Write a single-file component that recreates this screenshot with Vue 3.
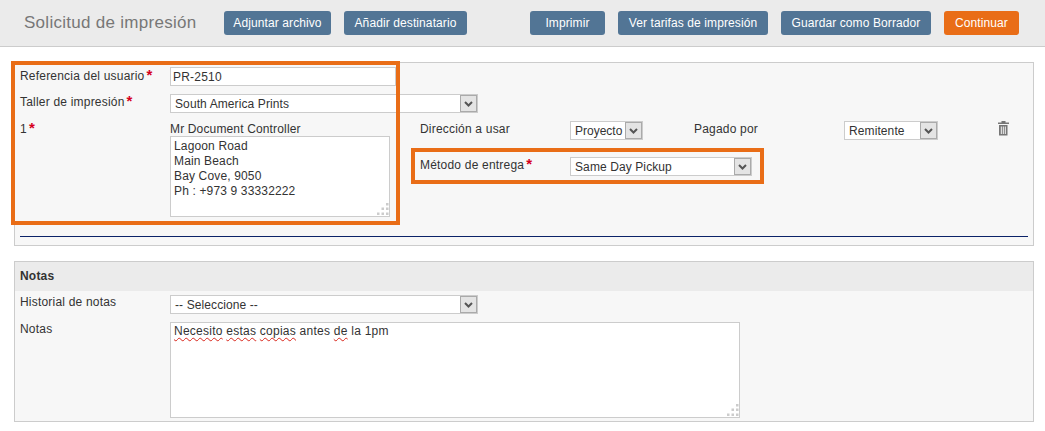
<script setup>
const address = ['Lagoon Road', 'Main Beach', 'Bay Cove, 9050', 'Ph : +973 9 33332222']
const leftButtons = ['Adjuntar archivo', 'Añadir destinatario']
const rightButtons = ['Imprimir', 'Ver tarifas de impresión', 'Guardar como Borrador']
const grip = [[10, 0], [5.5, 4.5], [10, 4.5], [1, 9.5], [5.5, 9.5], [10, 9.5]]
</script>

<template>
  <div class="page">
    <header class="topbar">
      <h1 class="title">Solicitud de impresión</h1>
      <button v-for="b in leftButtons" :key="b" class="btn left">{{ b }}</button>
      <span class="spacer"></span>
      <button v-for="b in rightButtons" :key="b" class="btn right">{{ b }}</button>
      <button class="btn cta">Continuar</button>
    </header>

    <section class="panel first">
      <div class="row r1">
        <label class="lbl">Referencia del usuario<i class="req">*</i></label>
        <div class="field input">PR-2510</div>
      </div>
      <div class="row r2">
        <label class="lbl">Taller de impresión<i class="req">*</i></label>
        <div class="field select wide"><span>South America Prints</span><b class="arrow"><svg width="9" height="6" viewBox="0 0 9 6"><path d="M1 1l3.5 3.5L8 1" fill="none" stroke="#555" stroke-width="2"/></svg></b></div>
      </div>
      <div class="row r3">
        <label class="lbl num">1<i class="req">*</i></label>
        <div class="addr">
          <div class="person">Mr Document Controller</div>
          <div class="field area addr-box">
            <div v-for="l in address" :key="l">{{ l }}</div>
            <svg class="grip" width="13" height="13" viewBox="0 0 13 13"><rect v-for="g in grip" :key="g.join()" :x="g[0]" :y="g[1]" width="2.5" height="2.5" fill="#ccc"/></svg>
          </div>
        </div>
        <div class="delivery">
          <div class="d-row">
            <span class="d-lbl">Dirección a usar</span>
            <div class="field select s-proj"><span>Proyecto</span><b class="arrow"><svg width="9" height="6" viewBox="0 0 9 6"><path d="M1 1l3.5 3.5L8 1" fill="none" stroke="#555" stroke-width="2"/></svg></b></div>
            <span class="d-paid">Pagado por</span>
            <div class="field select s-rem"><span>Remitente</span><b class="arrow"><svg width="9" height="6" viewBox="0 0 9 6"><path d="M1 1l3.5 3.5L8 1" fill="none" stroke="#555" stroke-width="2"/></svg></b></div>
            <svg class="trash" width="11" height="15" viewBox="0 0 11 15">
              <path d="M3.5 0h4v1.5H11V3H0V1.5h3.5z" fill="#777"/>
              <path d="M1 4h8.5v10.5H1z M2.8 5.5v7.5h1v-7.5z M4.8 5.5v7.5h1v-7.5z M6.8 5.5v7.5h1v-7.5z" fill="#777" fill-rule="evenodd"/>
            </svg>
          </div>
          <div class="d-row method">
            <span class="d-lbl">Método de entrega<i class="req">*</i></span>
            <div class="field select s-met"><span>Same Day Pickup</span><b class="arrow"><svg width="9" height="6" viewBox="0 0 9 6"><path d="M1 1l3.5 3.5L8 1" fill="none" stroke="#555" stroke-width="2"/></svg></b></div>
          </div>
        </div>
      </div>
      <div class="rule"></div>
    </section>

    <section class="panel second">
      <div class="p-head">Notas</div>
      <div class="row r4">
        <label class="lbl">Historial de notas</label>
        <div class="field select wide"><span>-- Seleccione --</span><b class="arrow"><svg width="9" height="6" viewBox="0 0 9 6"><path d="M1 1l3.5 3.5L8 1" fill="none" stroke="#555" stroke-width="2"/></svg></b></div>
      </div>
      <div class="row r5">
        <label class="lbl">Notas</label>
        <div class="field area notes">
          <span class="sp">Necesito</span> <span class="sp">estas</span> <span class="sp">copias</span> antes <span class="sp">de</span> la 1pm
          <svg class="grip" width="13" height="13" viewBox="0 0 13 13"><rect v-for="g in grip" :key="g.join()" :x="g[0]" :y="g[1]" width="2.5" height="2.5" fill="#ccc"/></svg>
        </div>
      </div>
    </section>

    <div class="mark m1"></div>
    <div class="mark m2"></div>
  </div>
</template>

<style scoped>
.page { position: relative; width: 1045px; height: 431px; overflow: hidden; background: #fff; font: 12px "Liberation Sans", Arial, sans-serif; color: #333; letter-spacing: .2px; }
.topbar { display: flex; align-items: center; height: 46px; box-sizing: content-box; background: #ebebeb; border-bottom: 1px solid #ccc; padding-right: 26px; }
.title { margin: 0 28px 0 24px; width: 172px; font-size: 17px; font-weight: 400; letter-spacing: .28px; color: #777; white-space: nowrap; }
.btn { height: 24px; border: 0; border-radius: 3px; font: inherit; letter-spacing: .1px; color: #fff; background: #527595; padding: 0; white-space: nowrap; }
.left:nth-of-type(1) { width: 107px; margin-right: 13px; }
.left:nth-of-type(2) { width: 123px; }
.spacer { flex: 1; }
.right:nth-of-type(3) { width: 75px; margin-right: 13px; }
.right:nth-of-type(4) { width: 150px; margin-right: 13px; }
.right:nth-of-type(5) { width: 150px; margin-right: 13px; }
.cta { width: 75px; background: #e96d17; }
.panel { margin: 15px 11px 0 14px; border: 1px solid #ccc; background: #f7f7f7; }
.first { height: 178px; padding: 4px 5px 0; box-sizing: content-box; }
.second { height: 159px; }
.row { display: flex; align-items: flex-start; }
.lbl { width: 150px; flex: none; line-height: 14px; padding-top: 1px; }
.r1 .lbl { padding-top: 2px; }
.r4 .lbl, .r5 .lbl { padding-top: 0; }
.req { font-style: normal; font-size: 15px; line-height: 10px; color: #d6001c; margin-left: 2px; font-weight: 700; }
.field { box-sizing: border-box; background: #fff; border: 1px solid #ccc; color: #333; }
.input { width: 226px; height: 19px; line-height: 18px; padding-left: 2px; }
.select { display: flex; align-items: center; justify-content: space-between; height: 19px; padding-left: 4px; line-height: 17px; letter-spacing: .1px; }
.select span { padding-top: 1px; }
.wide { width: 308px; }
.arrow { display: flex; align-items: center; justify-content: center; flex: none; width: 17px; height: 17px; box-sizing: border-box; background: #e4e4e4; border: 1px solid #aaa; }
.r1 { margin-bottom: 8px; }
.r2 { margin-bottom: 8px; }
.r3 { height: 115px; }
.person { line-height: 14px; height: 15px; padding-top: 1px; box-sizing: border-box; letter-spacing: .15px; }
.addr { width: 250px; flex: none; }
.area { position: relative; padding: 2px 3px; line-height: 15px; }
.addr-box { width: 220px; height: 81px; letter-spacing: .15px; }
.grip { position: absolute; right: 0; bottom: 0; }
.delivery { flex: 1; }
.d-row { display: flex; align-items: flex-start; }
.d-lbl { width: 150px; flex: none; line-height: 14px; padding-top: 1px; }
.s-proj { width: 73px; letter-spacing: 0; }
.d-paid { margin-left: 51px; width: 150px; flex: none; line-height: 14px; padding-top: 1px; }
.s-rem { width: 94px; }
.trash { margin-left: 60px; }
.method { margin-top: 17px; }
.s-met { width: 182px; }
.rule { height: 1px; background: #0b2268; }
.p-head { height: 29px; line-height: 28px; background: #ebebeb; font-weight: 700; padding-left: 5px; letter-spacing: .2px; }
.r4, .r5 { padding-left: 5px; }
.r4 { margin-top: 4px; margin-bottom: 8px; }
.notes { width: 570px; height: 96px; padding-top: 1px; letter-spacing: .25px; }
.sp { text-decoration: underline wavy #d8261c 1px; text-underline-offset: 2px; }
.mark { position: absolute; box-sizing: border-box; border: 4px solid #e96d17; pointer-events: none; }
.m1 { left: 11px; top: 61px; width: 389px; height: 164px; }
.m2 { left: 411px; top: 148px; width: 353px; height: 36px; }
</style>
